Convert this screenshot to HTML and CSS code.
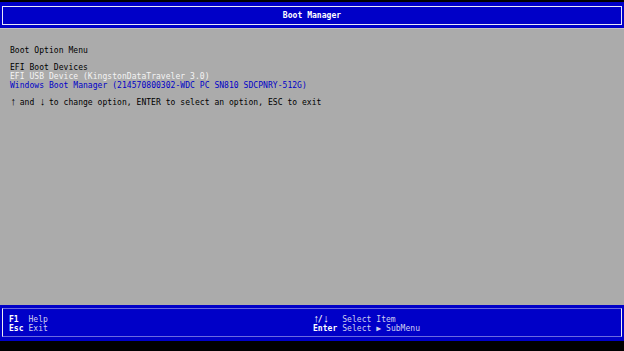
FILE: index.html
```html
<!DOCTYPE html>
<html>
<head>
<meta charset="utf-8">
<link rel="stylesheet" href="styles.css">
</head>
<body>
<div class="screen">
  <div class="topgap"></div>
  <header class="header">
    <div class="title-box">Boot Manager</div>
  </header>
  <main class="panel">
    <div class="line dark">Boot Option Menu</div>
    <div class="line blank"></div>
    <div class="line dark">EFI Boot Devices</div>
    <div class="line sel">EFI USB Device (KingstonDataTraveler 3.0)</div>
    <div class="line blue">Windows Boot Manager (214570800302-WDC PC SN810 SDCPNRY-512G)</div>
    <div class="line blank"></div>
    <div class="line dark"><span class="arrow">↑</span> and <span class="arrow">↓</span> to change option, ENTER to select an option, ESC to exit</div>
  </main>
  <footer class="footer">
    <div class="help-box">
      <div class="help"><span class="key">F1</span>  <span class="desc">Help</span></div>
      <div class="help"><span class="key"><span class="arrow">↑</span>/<span class="arrow">↓</span></span>   <span class="desc">Select Item</span></div>
      <div class="help"><span class="key">Esc</span> <span class="desc">Exit</span></div>
      <div class="help"><span class="key">Enter</span> <span class="desc">Select ▶ SubMenu</span></div>
    </div>
  </footer>
  <div class="bottomgap"></div>
</div>
</body>
</html>
```

FILE: styles.css
```css
html, body {
  margin: 0;
  padding: 0;
  background: #000;
}
.screen {
  width: 624px;
  height: 351px;
  display: flex;
  flex-direction: column;
  font-family: "DejaVu Sans Mono", "Liberation Mono", monospace;
  font-size: 8px;
  letter-spacing: 0.05px;
}
.topgap {
  height: 2px;
  flex: none;
}
.header {
  height: 26px;
  flex: none;
  background: #0000c8;
  box-sizing: border-box;
  padding: 4px 2px 3px 2px;
}
.title-box {
  height: 19px;
  box-sizing: border-box;
  border: 1px solid #e8e8f8;
  color: #fff;
  font-weight: bold;
  text-align: center;
  line-height: 17px;
}
.panel {
  height: 277px;
  flex: none;
  background: #ababab;
  border-top: 1px solid #c4c4c4;
  box-sizing: border-box;
  padding: 18px 10px 0 10px;
}
.line {
  height: 8.67px;
  line-height: 8.67px;
  white-space: pre;
}
.arrow {
  font-family: "Liberation Mono", "DejaVu Sans Mono", monospace;
  font-weight: bold;
  font-size: 11px;
  letter-spacing: -1.75px;
  line-height: 0;
  vertical-align: 0.5px;
}
.dark { color: #000; }
.sel { color: #f4f4f4; }
.blue { color: #0000c8; }
.footer {
  height: 36px;
  flex: none;
  background: #0000c8;
  box-sizing: border-box;
  padding: 3px 2px 4px 2px;
}
.help-box {
  height: 29px;
  box-sizing: border-box;
  border-left: 1px solid #f0f0f0;
  border-right: 1px solid #f0f0f0;
  border-top: 1px solid #6a6ae0;
  border-bottom: 1px solid #6a6ae0;
  padding: 6px 0 0 6px;
  display: grid;
  grid-template-columns: 304px auto;
  grid-auto-rows: 9px;
}
.help {
  white-space: pre;
  line-height: 9px;
}
.key {
  color: #fff;
  font-weight: bold;
}
.desc {
  color: #d0d0f0;
}
.bottomgap {
  flex: 1;
  background: #000;
}
```
